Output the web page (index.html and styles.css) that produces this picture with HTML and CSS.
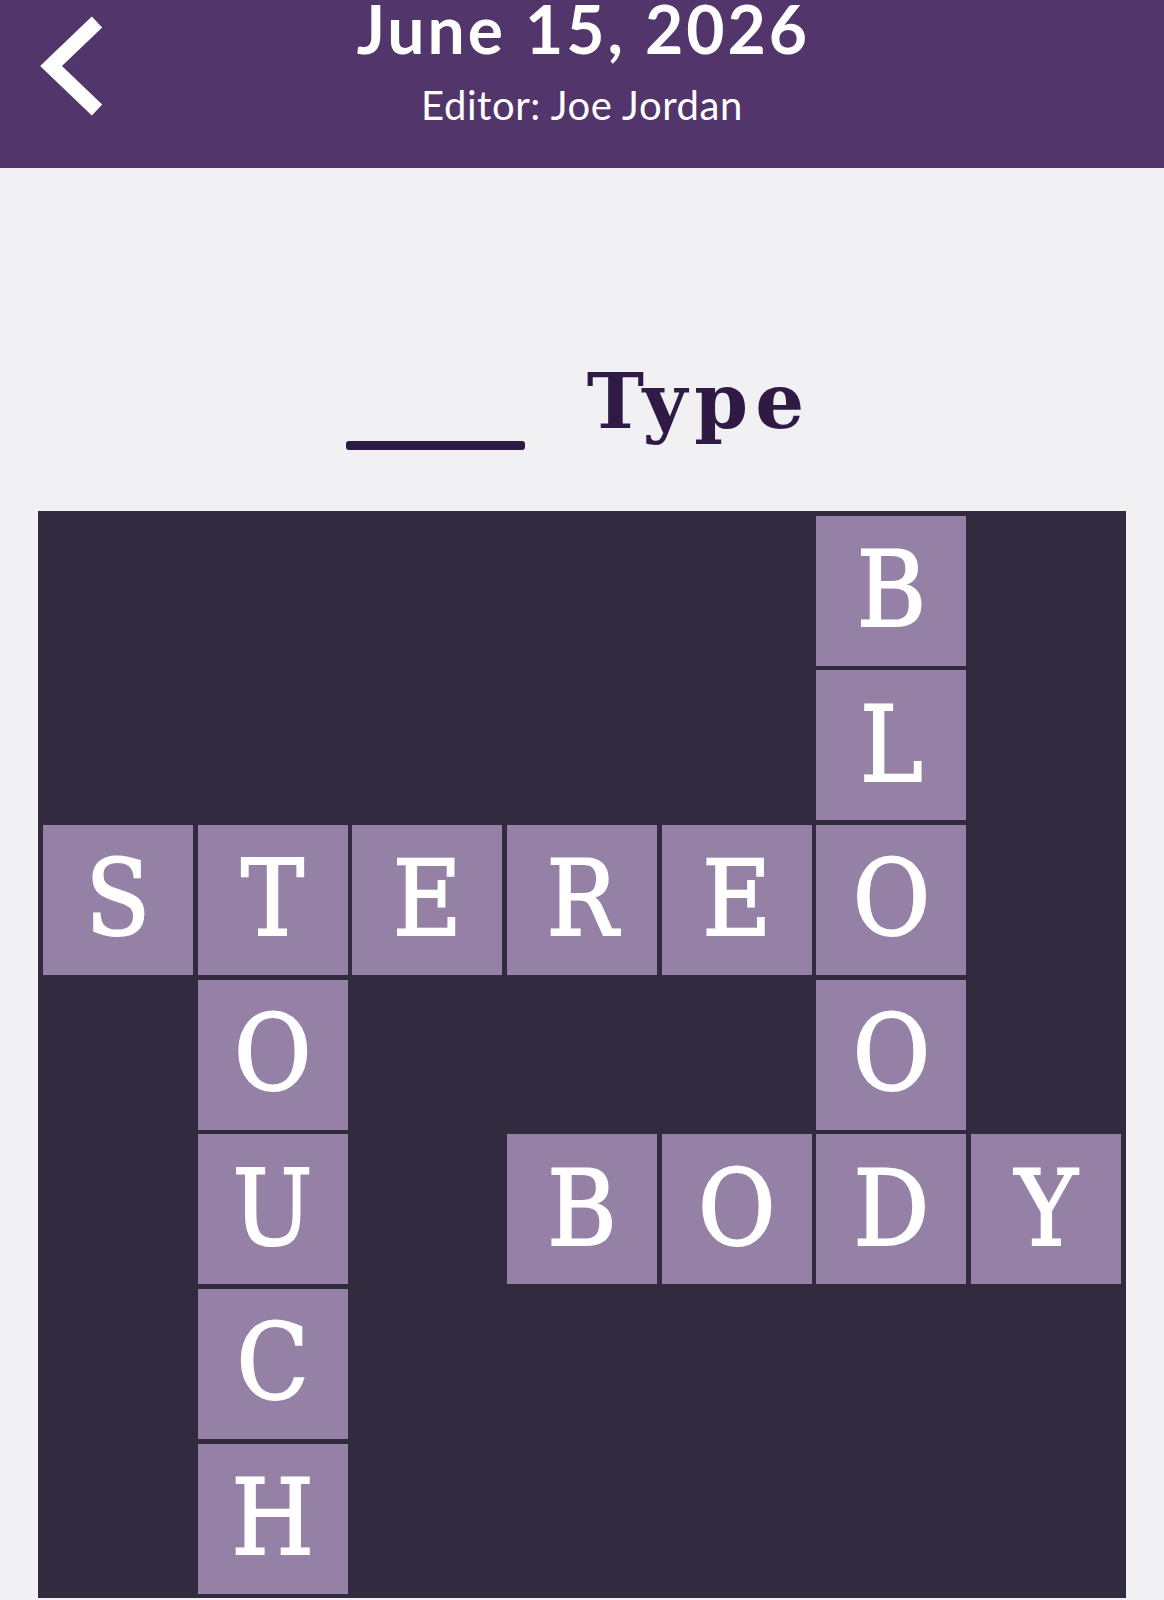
FILE: index.html
```html
<!DOCTYPE html>
<html lang="en">
<head>
<meta charset="utf-8">
<title>June 15, 2026</title>
<link rel="stylesheet" href="styles.css">
</head>
<body>
<header class="topbar">
  <div class="back">
    <svg class="back-icon" width="110" height="130" viewBox="0 0 110 130" aria-hidden="true">
      <polyline points="97,22 51,66 97,110" fill="none" stroke="#ffffff" stroke-width="15" stroke-linejoin="miter" stroke-linecap="butt"/>
    </svg>
  </div>
  <div class="heading">
    <div class="date">June 15, 2026</div>
    <div class="editor">Editor: Joe Jordan</div>
  </div>
  <div class="spacer"></div>
</header>
<main class="content">
  <h1 class="clue"><span class="blank-bar"></span><span class="clue-word">Type</span></h1>
  <div class="board">
    <div class="cell"></div><div class="cell"></div><div class="cell"></div><div class="cell"></div><div class="cell"></div><div class="cell tile">B</div><div class="cell"></div>
    <div class="cell"></div><div class="cell"></div><div class="cell"></div><div class="cell"></div><div class="cell"></div><div class="cell tile">L</div><div class="cell"></div>
    <div class="cell tile">S</div><div class="cell tile">T</div><div class="cell tile">E</div><div class="cell tile">R</div><div class="cell tile">E</div><div class="cell tile">O</div><div class="cell"></div>
    <div class="cell"></div><div class="cell tile">O</div><div class="cell"></div><div class="cell"></div><div class="cell"></div><div class="cell tile">O</div><div class="cell"></div>
    <div class="cell"></div><div class="cell tile">U</div><div class="cell"></div><div class="cell tile">B</div><div class="cell tile">O</div><div class="cell tile">D</div><div class="cell tile">Y</div>
    <div class="cell"></div><div class="cell tile">C</div><div class="cell"></div><div class="cell"></div><div class="cell"></div><div class="cell"></div><div class="cell"></div>
    <div class="cell"></div><div class="cell tile">H</div><div class="cell"></div><div class="cell"></div><div class="cell"></div><div class="cell"></div><div class="cell"></div>
  </div>
</main>
</body>
</html>
```
FILE: styles.css
```css
html, body {
  margin: 0;
  padding: 0;
}
body {
  background: #f1f0f3;
  font-family: Lato, "Open Sans", sans-serif;
  overflow: hidden;
}
.topbar {
  background: #52356b;
  height: 168px;
  display: grid;
  grid-template-columns: 1fr auto 1fr;
  color: #ffffff;
}
.back {
  align-self: start;
}
.back-icon {
  display: block;
}
.heading {
  text-align: center;
}
.date {
  font-weight: 700;
  font-size: 66px;
  line-height: 57px;
  letter-spacing: 3px;
  margin-right: -3px;
}
.editor {
  font-weight: 400;
  font-size: 40px;
  line-height: 40px;
  margin-top: 28px;
  letter-spacing: 0.6px;
}
.content {
  padding-top: 195px;
}
.clue {
  margin: 0 0 71px 0;
  padding-right: 14px;
  display: flex;
  justify-content: center;
  align-items: flex-end;
  gap: 62px;
  color: #2f1a45;
  font-family: "DejaVu Serif", serif;
  font-weight: 700;
  font-size: 77px;
  line-height: 77px;
}
.blank-bar {
  display: block;
  width: 179px;
  height: 9px;
  border-radius: 3px;
  background: #2f1a45;
  margin-bottom: -10px;
}
.clue-word {
  display: block;
  letter-spacing: 7px;
  margin-right: -7px;
}
.board {
  width: max-content;
  margin: 0 auto;
  background: #322a3e;
  padding: 4.5px;
  display: grid;
  grid-template-columns: repeat(7, 150px);
  grid-auto-rows: 150px;
  gap: 4.7px;
}
.cell {
  display: flex;
  align-items: center;
  justify-content: center;
}
.tile {
  background: #9581a5;
  color: #ffffff;
  font-family: "DejaVu Serif", serif;
  font-stretch: condensed;
  font-size: 105px;
  line-height: 1;
  -webkit-text-stroke: 2px #ffffff;
}
```
